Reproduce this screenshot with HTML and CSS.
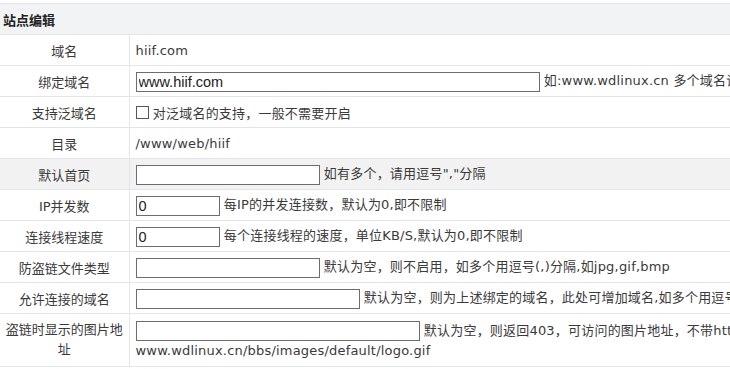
FILE: index.html
```
<!DOCTYPE html>
<html lang="zh-CN">
<head>
    <meta charset="UTF-8">
    <title>站点编辑</title>
    <link rel="stylesheet" href="styles.css">
</head>
<body>
    <div class="page">
        <table class="edit-table">
            <colgroup>
                <col class="col-label">
                <col>
            </colgroup>
            <tr class="head-row">
                <th colspan="2">站点编辑</th>
            </tr>
            <tr>
                <td class="label">域名</td>
                <td>hiif.com</td>
            </tr>
            <tr>
                <td class="label">绑定域名</td>
                <td><input type="text" class="field w-wide" value="www.hiif.com"> 如:www.wdlinux.cn 多个域名请用空格隔开</td>
            </tr>
            <tr>
                <td class="label">支持泛域名</td>
                <td><span class="check"></span> 对泛域名的支持，一般不需要开启</td>
            </tr>
            <tr>
                <td class="label">目录</td>
                <td>/www/web/hiif</td>
            </tr>
            <tr class="shaded">
                <td class="label">默认首页</td>
                <td><input type="text" class="field w-mid"> 如有多个，请用逗号","分隔</td>
            </tr>
            <tr>
                <td class="label">IP并发数</td>
                <td><input type="text" class="field w-small" value="0"> 每IP的并发连接数，默认为0,即不限制</td>
            </tr>
            <tr>
                <td class="label">连接线程速度</td>
                <td><input type="text" class="field w-small" value="0"> 每个连接线程的速度，单位KB/S,默认为0,即不限制</td>
            </tr>
            <tr>
                <td class="label">防盗链文件类型</td>
                <td><input type="text" class="field w-mid"> 默认为空，则不启用，如多个用逗号(,)分隔,如jpg,gif,bmp</td>
            </tr>
            <tr>
                <td class="label">允许连接的域名</td>
                <td><input type="text" class="field w-large"> 默认为空，则为上述绑定的域名，此处可增加域名,如多个用逗号(,)分隔</td>
            </tr>
            <tr class="tall">
                <td class="label">盗链时显示的图片地址</td>
                <td><input type="text" class="field w-xl"> 默认为空，则返回403，可访问的图片地址，不带http://<br>www.wdlinux.cn/bbs/images/default/logo.gif</td>
            </tr>
        </table>
    </div>
</body>
</html>
```
FILE: styles.css
```
body {
    margin: 0;
    background-color: #fff;
    font-family: "DejaVu Sans", Verdana, "Noto Sans CJK SC", sans-serif;
    font-size: 13px;
    color: #3a3a3a;
}

.page {
    width: 730px;
    overflow: hidden;
    padding-top: 3px;
}

.edit-table {
    border-collapse: collapse;
    table-layout: fixed;
    width: 900px;
}

.col-label {
    width: 129px;
}

.edit-table th,
.edit-table td {
    border-top: 1px solid #e4e5ea;
    border-bottom: 1px solid #e4e5ea;
    height: 30px;
    padding: 0;
    white-space: nowrap;
    overflow: hidden;
}

.head-row th {
    background-color: #f2f3f5;
    text-align: left;
    padding-left: 3px;
    font-weight: bold;
    font-family: "Noto Sans CJK SC", sans-serif;
    color: #222;
}

.edit-table td {
    padding-left: 6px;
    font-family: "DejaVu Sans", "Noto Sans CJK SC", sans-serif;
    letter-spacing: 0.2px;
}

.edit-table td.label {
    padding: 0;
    text-align: center;
    border-right: 1px solid #e4e5ea;
    letter-spacing: 0;
}

.shaded td {
    background-color: #f2f2f2;
}

.tall td {
    height: 50px;
    line-height: 20px;
    padding-top: 2px;
}

.tall td.label {
    white-space: normal;
    padding: 0 3px;
}

.field {
    box-sizing: border-box;
    height: 20px;
    margin: 0;
    padding: 0 2px;
    border: 1px solid #6d6d6d;
    font-family: "Liberation Sans", Arial, sans-serif;
    font-size: 14.5px;
    color: #222;
    vertical-align: middle;
}

.w-small { width: 84px; }
.w-mid { width: 184px; }
.w-large { width: 224px; }
.w-wide { width: 404px; }
.w-xl { width: 284px; }

.check {
    display: inline-block;
    box-sizing: border-box;
    width: 13px;
    height: 13px;
    border: 1px solid #555;
    vertical-align: -1px;
}
```
